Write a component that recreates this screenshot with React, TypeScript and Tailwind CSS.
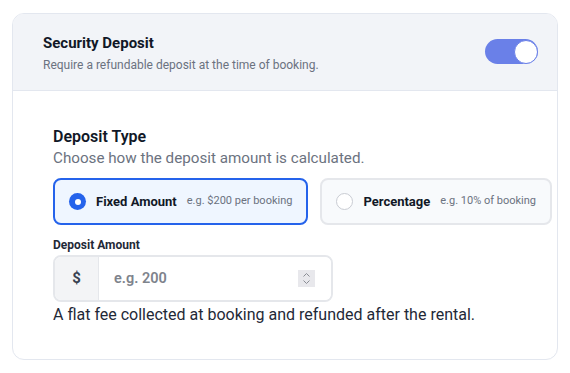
import React, { useState } from "react";

type Option = { id: string; label: string; hint: string };

const options: Option[] = [
  { id: "fixed", label: "Fixed Amount", hint: "e.g. $200 per booking" },
  { id: "percent", label: "Percentage", hint: "e.g. 10% of booking" },
];

const App = () => {
  const [enabled, setEnabled] = useState(true);
  const [type, setType] = useState("fixed");

  return (
    <div
      className="w-[570px] h-[373px] bg-white pt-[13px] pl-[12px]"
      style={{ fontFamily: "Roboto, 'Liberation Sans', sans-serif" }}
    >
      <div className="w-[546px] h-[347px] rounded-[12px] border border-[#e3e7ef] overflow-hidden">
        {/* header */}
        <div className="h-[77px] bg-[#f2f4f8] border-b border-[#e3e7ef] flex items-center justify-between pl-[30px] pr-[19px]">
          <div className="flex flex-col gap-[4px] pt-[1px]">
            <h2 className="text-[15px] leading-[20px] font-bold text-[#111827]">Security Deposit</h2>
            <p className="text-[12px] leading-[16px] text-[#6b7280]">
              Require a refundable deposit at the time of booking.
            </p>
          </div>
          <button
            onClick={() => setEnabled(!enabled)}
            className="w-[53px] h-[25px] rounded-full bg-[#6a80e8] flex items-center justify-end mb-[1px]"
          >
            <span className="w-[24px] h-[24px] rounded-full bg-white border border-[#6a80e8]" />
          </button>
        </div>

        {/* body */}
        <div className="pl-[40px] pt-[36px]">
          <h3 className="text-[16px] leading-[20px] font-semibold text-[#111827]">Deposit Type</h3>
          <p className="text-[15.2px] leading-[20px] text-[#6b7280] mt-[1px]">
            Choose how the deposit amount is calculated.
          </p>

          <div className="flex gap-[12px] mt-[10px] w-[520px]">
            {options.map((o) => {
              const active = o.id === type;
              return (
                <button
                  key={o.id}
                  onClick={() => setType(o.id)}
                  className={
                    active
                      ? "h-[47px] shrink-0 flex items-center px-[14px] rounded-[8px] border-2 border-[#2563eb] bg-[#eff6ff]"
                      : "h-[47px] shrink-0 flex items-center px-[14px] rounded-[8px] border-2 border-[#e5e7eb] bg-[#f8fafc]"
                  }
                >
                  {active ? (
                    <span className="w-[17px] h-[17px] rounded-full bg-[#2563eb] flex items-center justify-center">
                      <span className="w-[6px] h-[6px] rounded-full bg-white" />
                    </span>
                  ) : (
                    <span className="w-[17px] h-[17px] rounded-full border-[1.5px] border-[#c9ccd3] bg-white" />
                  )}
                  <span className="ml-[10px] text-[13px] font-bold text-[#111827]">{o.label}</span>
                  <span className="ml-[10px] text-[11px] text-[#6b7280]">{o.hint}</span>
                </button>
              );
            })}
          </div>

          <label className="block text-[12px] leading-[16px] font-bold text-[#1f2937] mt-[12px]">
            Deposit Amount
          </label>
          <div className="w-[280px] h-[47px] mt-[2px] flex rounded-[8px] border-2 border-[#e5e7eb] overflow-hidden">
            <div className="w-[44px] bg-[#f3f4f6] border-r border-[#e5e7eb] flex items-center justify-center text-[15px] font-bold text-[#374151]">
              $
            </div>
            <div className="flex-1 flex items-center pl-[15px] pr-[16px] bg-white">
              <span className="flex-1 text-[14.5px] font-semibold text-[#7e838c]">e.g. 200</span>
              <span className="w-[17px] h-[17px] bg-[#e8e8ec] flex items-center justify-center">
                <svg width="9" height="13" viewBox="0 0 9 13" fill="none" stroke="#8a8d94" strokeWidth="1">
                  <path d="M1.5 4.5 4.5 1.5 7.5 4.5" />
                  <path d="M1.5 8.5 4.5 11.5 7.5 8.5" />
                </svg>
              </span>
            </div>
          </div>
          <p className="text-[16px] leading-[22px] text-[#1f2937] mt-[2px]">
            A flat fee collected at booking and refunded after the rental.
          </p>
        </div>
      </div>
    </div>
  );
};

export default App;
